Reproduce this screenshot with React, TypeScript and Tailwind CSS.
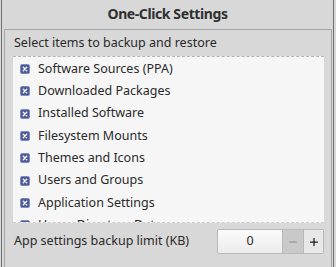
import { Minus, Plus } from 'lucide-react'

const ITEMS = [
  'Software Sources (PPA)',
  'Downloaded Packages',
  'Installed Software',
  'Filesystem Mounts',
  'Themes and Icons',
  'Users and Groups',
  'Application Settings',
  'Home Directory Data',
]

function CheckBox() {
  return (
    <svg width="10" height="10" viewBox="0 0 10 10" className="shrink-0">
      <rect x="0.5" y="0.5" width="9" height="9" rx="1.5" fill="#4c5a98" stroke="#7f8bbd" />
      <path d="M3.3 3.3 L6.7 6.7 M6.7 3.3 L3.3 6.7" stroke="#ffffff" strokeWidth="1.3" strokeLinecap="round" />
    </svg>
  )
}

export default function App() {
  return (
    <div
      className="w-[336px] h-[267px] overflow-hidden bg-[#d8d8d8] text-[#2a2a2a]"
      style={{ fontFamily: '"Noto Sans", "Open Sans", sans-serif' }}
    >
      <div className="ml-[1px] mr-[2px] h-full border-l border-r border-[#707070] flex flex-col">
        {/* Title */}
        <div className="h-[29px] pb-[3px] flex items-center justify-center text-[14px] tracking-[-0.4px] font-bold text-[#303030]">
          One-Click Settings
        </div>

        {/* Frame */}
        <div className="ml-[2px] mr-[1px] flex-1 border border-b-0 border-[#a6a6a6] pl-[8px] pr-[7px] flex flex-col">
          <div className="h-[26px] flex items-center pl-[1px] text-[12.5px] leading-none">
            Select items to backup and restore
          </div>

          {/* List */}
          <div className="h-[167px] overflow-hidden bg-[#f6f6f6] border-t border-[#b4b4b4] border-b border-dashed border-b-[#cfcfcf] pt-[1px]">
            {ITEMS.map((item) => (
              <div key={item} className="h-[22.3px] flex items-center gap-[8px] pl-[7px] text-[12.5px]">
                <CheckBox />
                <span className="leading-none">{item}</span>
              </div>
            ))}
          </div>

          {/* Limit row */}
          <div className="mt-[6px] flex items-center justify-between">
            <span className="pl-[1px] text-[12.5px]">App settings backup limit (KB)</span>
            <div className="flex h-[25px] border border-[#b9b9b9] rounded-[2px] overflow-hidden">
              <div className="w-[64px] flex items-center justify-center text-[12.5px] bg-gradient-to-b from-[#fbfbfb] to-[#ececec]">
                0
              </div>
              <div className="w-[21px] flex items-center justify-center bg-[#c9c9c9] border-l border-[#b9b9b9] text-[#8e8e8e]">
                <Minus size={12} strokeWidth={2} />
              </div>
              <div className="w-[20px] flex items-center justify-center bg-[#e8e8e8] border-l border-[#b9b9b9] text-[#1a1a1a]">
                <Plus size={12} strokeWidth={2.5} />
              </div>
            </div>
          </div>
        </div>
      </div>
    </div>
  )
}
